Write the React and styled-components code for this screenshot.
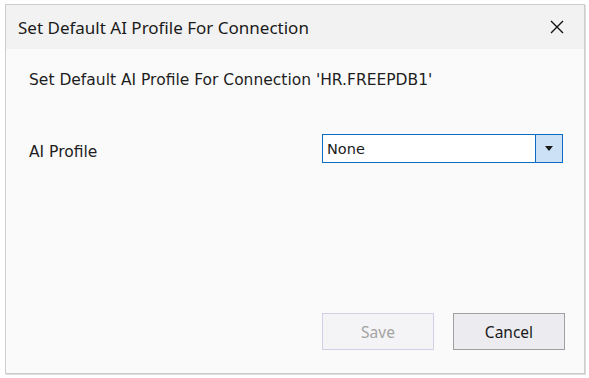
import React from 'react'
import styled, { createGlobalStyle } from 'styled-components'

const GlobalStyle = createGlobalStyle`
  html, body {
    margin: 0;
    padding: 0;
    background: #ffffff;
  }
`

const Page = styled.div`
  width: 589px;
  height: 378px;
  padding: 4px 0 0 5px;
  box-sizing: border-box;
`

const Dialog = styled.div`
  width: 580px;
  height: 370px;
  box-sizing: border-box;
  border: 1px solid #cdcdcd;
  box-shadow: 1px 1px 0 #dcdcdc;
  background: #fafafa;
  display: flex;
  flex-direction: column;
`

const TitleBar = styled.div`
  height: 44px;
  background: #f2f2f2;
  display: flex;
  align-items: center;
  justify-content: space-between;
  padding: 0 20px 0 12px;
  font-family: "Noto Sans", sans-serif;
  font-size: 17px;
  color: #1a1a1a;
`

const CloseButton = styled.button`
  border: none;
  background: none;
  padding: 0;
  width: 14px;
  height: 14px;
  display: flex;
`

const Body = styled.div`
  flex: 1;
  padding: 18px 21px 0 23px;
  font-family: "DejaVu Sans", sans-serif;
  font-size: 15.5px;
  color: #1e1e1e;
  display: flex;
  flex-direction: column;
`

const Heading = styled.div`
  height: 26px;
  line-height: 26px;
`

const FieldRow = styled.div`
  margin-top: 41px;
  display: flex;
  align-items: center;
  justify-content: space-between;
`

const Label = styled.div`
  padding-top: 6px;
`

const Select = styled.div`
  width: 241px;
  height: 29px;
  box-sizing: border-box;
  border: 1px solid #0a6cc4;
  background: #fff;
  display: flex;
  align-items: stretch;
`

const SelectValue = styled.div`
  flex: 1;
  padding-left: 4px;
  display: flex;
  align-items: center;
  font-size: 14.5px;
  color: #1a1a1a;
`

const SelectArrow = styled.div`
  width: 26px;
  background: #cce0f6;
  border-left: 1px solid #0a6cc4;
  display: flex;
  align-items: center;
  justify-content: center;
`

const Footer = styled.div`
  margin-top: auto;
  display: flex;
  justify-content: flex-end;
  gap: 19px;
  padding: 0 19px 23px 0;
`

const Button = styled.button`
  width: 112px;
  height: 37px;
  box-sizing: border-box;
  font-family: "Noto Sans", sans-serif;
  font-size: 15.5px;
  border: 1px solid ${p => (p.disabled ? '#d0d0e4' : '#a0a0a0')};
  background: ${p => (p.disabled ? '#f4f4f6' : '#ececf0')};
  color: ${p => (p.disabled ? '#a3a3a3' : '#1a1a1a')};
  padding: 0;
`

export default function App() {
  return (
    <>
      <GlobalStyle />
      <Page>
        <Dialog>
          <TitleBar>
            <span>Set Default AI Profile For Connection</span>
            <CloseButton aria-label="Close">
              <svg width="14" height="14" viewBox="0 0 14 14">
                <path d="M1 1 L13 13 M13 1 L1 13" stroke="#111" strokeWidth="1.4" fill="none" />
              </svg>
            </CloseButton>
          </TitleBar>
          <Body>
            <Heading>Set Default AI Profile For Connection 'HR.FREEPDB1'</Heading>
            <FieldRow>
              <Label>AI Profile</Label>
              <Select>
                <SelectValue>None</SelectValue>
                <SelectArrow>
                  <svg width="8" height="5" viewBox="0 0 8 5">
                    <path d="M0 0 H8 L4 5 Z" fill="#1a1a1a" />
                  </svg>
                </SelectArrow>
              </Select>
            </FieldRow>
          </Body>
          <Footer>
            <Button disabled>Save</Button>
            <Button>Cancel</Button>
          </Footer>
        </Dialog>
      </Page>
    </>
  )
}
